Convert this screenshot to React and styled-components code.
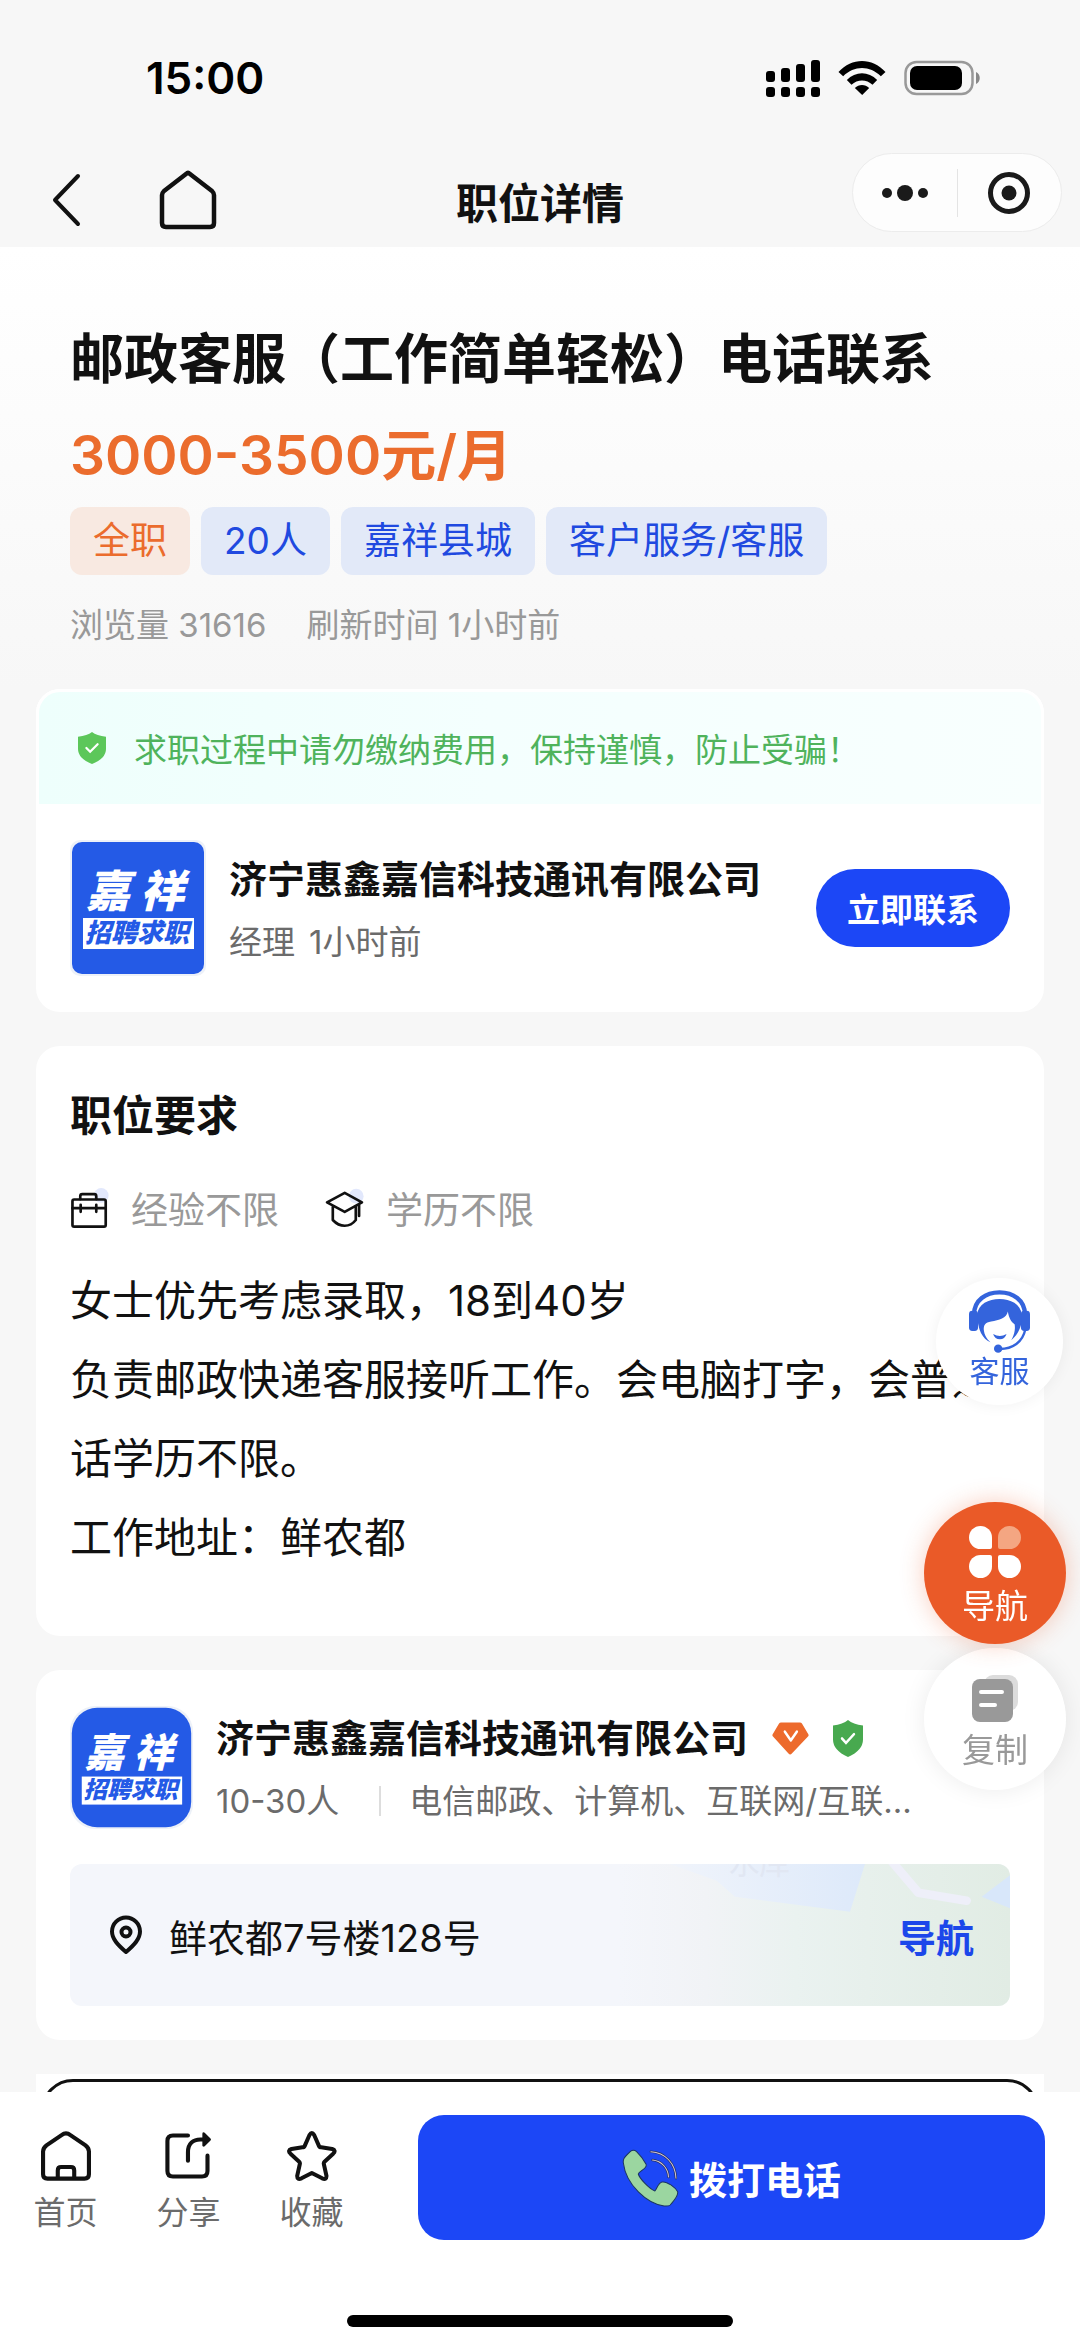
import React from "react";
import styled, { createGlobalStyle } from "styled-components";

const GlobalStyle = createGlobalStyle`
    * {
        box-sizing: border-box;
    }

    body {
        margin: 0;
        background-color: #f7f7f7;
        color: #111111;
        font-family: Inter, "Noto Sans CJK SC", sans-serif;
    }

    h1, h2, h3, p {
        margin: 0;
    }

    button {
        padding: 0;
        border: none;
        background: none;
        color: inherit;
        font-family: inherit;
        cursor: pointer;
    }

    a {
        color: inherit;
        text-decoration: none;
    }

    svg {
        display: block;
        flex-shrink: 0;
    }
`;

const Screen = styled.div`
    display: flex;
    flex-direction: column;
    height: 100vh;
`;

/* status bar + navigation */

const StatusBar = styled.div`
    display: flex;
    align-items: center;
    justify-content: space-between;
    height: 140px;
    padding: 16px 100px 0 146px;
`;

const Time = styled.span`
    color: #000000;
    font-size: 44px;
    font-weight: 600;
`;

const StatusIcons = styled.div`
    display: flex;
    align-items: center;
    gap: 18px;
`;

const NavBar = styled.header`
    display: grid;
    grid-template-columns: 1fr auto 1fr;
    align-items: center;
    height: 107px;
    padding: 13px 18px 0;
`;

const NavActions = styled.div`
    display: flex;
    align-items: center;
    gap: 78px;
    padding-left: 34px;
`;

const NavTitle = styled.h1`
    font-size: 42px;
    font-weight: 600;
`;

const Capsule = styled.div`
    display: flex;
    align-items: center;
    justify-self: end;
    align-self: flex-start;
    width: 210px;
    height: 79px;
    border: 1px solid #ececec;
    border-radius: 40px;
    background-color: #fdfdfd;
`;

const CapsuleButton = styled.button`
    display: flex;
    flex: 1;
    align-items: center;
    justify-content: center;

    & + & {
        height: 48px;
        border-left: 1px solid #e4e4e4;
    }
`;

/* scrolling content */

const Content = styled.main`
    flex: 1;
    min-height: 0;
    overflow-y: auto;
    scrollbar-width: none;
`;

const Summary = styled.section`
    padding: 81px 70px 44px;
    background: linear-gradient(#ffffff, #f7f7f7);
`;

const JobTitle = styled.h2`
    font-size: 54px;
    line-height: 64px;
    font-weight: 600;
`;

const Salary = styled.p`
    margin-top: 31px;
    color: #eb6c2d;
    font-size: 55px;
    line-height: 64px;
    font-weight: 600;
`;

const Tags = styled.div`
    display: flex;
    flex-wrap: wrap;
    gap: 11px;
    margin-top: 20px;
`;

const Tag = styled.span`
    padding: 0 23px;
    border-radius: 12px;
    background-color: ${({ $accent }) => ($accent ? "#f8e9e1" : "#e2e9f8")};
    color: ${({ $accent }) => ($accent ? "#eb6c2d" : "#2049e0")};
    font-size: 37px;
    line-height: 68px;
`;

const Stats = styled.div`
    display: flex;
    gap: 40px;
    margin-top: 30px;
    color: #999999;
    font-size: 33px;
    line-height: 40px;
`;

const Cards = styled.div`
    display: flex;
    flex-direction: column;
    gap: 34px;
    padding: 0 36px;
`;

const Card = styled.section`
    border-radius: 24px;
    background-color: #ffffff;
`;

const SafetyTip = styled.p`
    display: flex;
    align-items: center;
    gap: 28px;
    height: 115px;
    padding-left: 39px;
    border: solid #ffffff;
    border-width: 3px 3px 0;
    border-radius: 24px 24px 0 0;
    background: linear-gradient(90deg, #eefffc, #f4fffe 45%, #f8fffe);
    color: #4fb35c;
    font-size: 33px;
`;

const Employer = styled.div`
    display: flex;
    align-items: center;
    gap: 23px;
    padding: 36px 34px;
`;

const CompanyText = styled.div`
    flex: 1;
    min-width: 0;
`;

const CompanyName = styled.h3`
    display: flex;
    align-items: center;
    gap: 24px;
    font-size: 38px;
    line-height: 48px;
    font-weight: 600;
`;

const CompanyMeta = styled.p`
    display: flex;
    align-items: center;
    gap: ${({ $divided }) => ($divided ? "28px" : "14px")};
    margin-top: 19px;
    color: #6b6b6b;
    font-size: 33px;
    line-height: 40px;
    white-space: nowrap;
`;

const Divider = styled.i`
    width: 2px;
    height: 30px;
    margin-left: 12px;
    background-color: #dddddd;
`;

const ContactButton = styled.button`
    width: 194px;
    height: 78px;
    border-radius: 39px;
    background-color: #1c47f6;
    color: #ffffff;
    font-size: 33px;
    font-weight: 600;
`;

const Requirements = styled(Card)`
    padding: 42px 34px 59px;
`;

const SectionTitle = styled.h3`
    font-size: 42px;
    line-height: 56px;
    font-weight: 600;
`;

const Conditions = styled.div`
    display: flex;
    gap: 46px;
    margin-top: 43px;
    color: #999999;
    font-size: 37px;
    line-height: 48px;
`;

const Condition = styled.div`
    display: flex;
    align-items: center;
    gap: 22px;
`;

const Description = styled.p`
    margin-top: 26px;
    font-size: 42px;
    line-height: 79px;
    white-space: pre-line;
`;

const CompanyCard = styled(Card)`
    padding: 36px 34px 34px;
`;

const CompanyRow = styled.div`
    display: flex;
    align-items: center;
    gap: 23px;
`;

const Address = styled.a`
    position: relative;
    display: flex;
    align-items: center;
    gap: 26px;
    height: 142px;
    margin-top: 35px;
    padding: 0 36px 0 39px;
    border-radius: 12px;
    background-color: #f4f6fb;
    overflow: hidden;
    font-size: 38px;
`;

const MapPreview = styled.svg`
    position: absolute;
    top: 0;
    right: 0;
`;

const AddressText = styled.span`
    flex: 1;
`;

const NavigateText = styled.strong`
    position: relative;
    color: #1c47ea;
    font-weight: 600;
`;

const NextPanel = styled.section`
    height: 140px;
    padding: 5px;
    background-color: #ffffff;
`;

const NextFrame = styled.div`
    height: 130px;
    border: 3px solid #111111;
    border-radius: 32px;
`;

/* floating shortcuts */

const Floating = styled.div`
    position: fixed;
    right: ${({ $right }) => $right}px;
    bottom: ${({ $bottom }) => $bottom}px;
    display: flex;
    flex-direction: column;
    gap: 4px;
`;

const tones = {
    help: "background-color: #ffffff; color: #3464dc; box-shadow: 0 0 16px rgba(0, 0, 0, 0.06);",
    primary: "background-color: #ea5a28; color: #ffffff; box-shadow: 0 0 24px rgba(234, 90, 40, 0.3); z-index: 1;",
    plain: "background-color: #ffffff; color: #999999; box-shadow: 0 0 24px rgba(0, 0, 0, 0.08);",
};

const Bubble = styled.button`
    display: flex;
    flex-direction: column;
    align-items: center;
    justify-content: center;
    gap: ${({ $small }) => ($small ? "0" : "8px")};
    width: ${({ $small }) => ($small ? 127 : 142)}px;
    height: ${({ $small }) => ($small ? 127 : 142)}px;
    padding-top: ${({ $small }) => ($small ? 0 : 6)}px;
    padding-bottom: ${({ $small }) => ($small ? 4 : 0)}px;
    border-radius: 50%;
    font-size: ${({ $small }) => ($small ? 30 : 33)}px;
    line-height: ${({ $small }) => ($small ? 36 : 40)}px;
    ${({ $tone }) => tones[$tone]}
`;

/* bottom bar */

const BottomBar = styled.footer`
    background-color: #ffffff;
`;

const BottomActions = styled.div`
    display: flex;
    align-items: center;
    padding: 23px 35px 0 4px;
`;

const TabButton = styled.button`
    display: flex;
    flex-direction: column;
    align-items: center;
    gap: 12px;
    width: 123px;
    padding-top: 8px;
    color: #6b6b6b;
    font-size: 32px;
    line-height: 40px;
`;

const CallButton = styled.button`
    display: flex;
    flex: 1;
    align-items: center;
    justify-content: center;
    gap: 10px;
    height: 125px;
    margin-left: 45px;
    border-radius: 26px;
    background-color: #1c47f6;
    color: #ffffff;
    font-size: 38px;
    font-weight: 600;
`;

const HomeIndicator = styled.div`
    width: 386px;
    height: 12px;
    margin: 75px auto 20px;
    border-radius: 6px;
    background-color: #000000;
`;

const SignalIcon = () => (
    <svg width="54" height="38" viewBox="0 0 54 38">
        <rect x="0" y="12" width="9" height="11" rx="3" />
        <rect x="15" y="9" width="9" height="14" rx="3" />
        <rect x="30" y="5" width="9" height="18" rx="3" />
        <rect x="45" y="1" width="9" height="22" rx="3" />
        {[0, 15, 30, 45].map((x) => (
            <rect key={x} x={x} y="28" width="9" height="10" rx="3" />
        ))}
    </svg>
);

const WifiIcon = () => (
    <svg width="48" height="34" viewBox="0 0 141 102">
        <path d="M0 33C40-11 101-11 141 33L127 46C94 13 47 13 14 46Z" />
        <path d="M25 57C51 30 90 30 116 57L102 71C84 54 57 54 39 71Z" />
        <path d="M49 81C61 69 80 69 92 81L71 102Z" />
    </svg>
);

const BatteryIcon = () => (
    <svg width="76" height="36" viewBox="0 0 76 36">
        <rect x="1.5" y="2" width="67" height="32" rx="11" fill="none" stroke="#999" strokeWidth="2.5" />
        <rect x="6" y="6" width="52" height="24" rx="7" />
        <path d="M72 12C77 14 77 22 72 24Z" fill="#888" />
    </svg>
);

const BackIcon = () => (
    <svg width="29" height="54" viewBox="0 0 29 54" fill="none" stroke="#111" strokeWidth="4" strokeLinecap="round" strokeLinejoin="round">
        <path d="M26 3L3 27L26 51" />
    </svg>
);

const NavHomeIcon = () => (
    <svg width="58" height="60" viewBox="0 0 58 60" fill="none" stroke="#111" strokeWidth="4.5" strokeLinejoin="round">
        <path d="M3 25Q3 23 5 21L27 4Q29 2 31 4L53 21Q55 23 55 25V53Q55 57 51 57H7Q3 57 3 53Z" />
    </svg>
);

const MoreIcon = () => (
    <svg width="48" height="18" viewBox="0 0 48 18" fill="#1a1a1a">
        <circle cx="6" cy="9" r="5" />
        <circle cx="24" cy="9" r="8" />
        <circle cx="42" cy="9" r="5" />
    </svg>
);

const CloseIcon = () => (
    <svg width="44" height="44" viewBox="0 0 44 44">
        <circle cx="22" cy="22" r="18.5" fill="none" stroke="#1a1a1a" strokeWidth="5" />
        <circle cx="22" cy="22" r="7.5" fill="#1a1a1a" />
    </svg>
);

const ShieldIcon = ({ width, height, color }) => (
    <svg width={width} height={height} viewBox="0 0 30 34" preserveAspectRatio="none">
        <path d="M15 0Q20 4 30 5V18Q30 28 15 34Q0 28 0 18V5Q10 4 15 0Z" fill={color} />
        <path d="M9 17L13 21L21 13" fill="none" stroke="#fff" strokeWidth="2.4" strokeLinecap="round" />
    </svg>
);

const VipIcon = () => (
    <svg width="37" height="33" viewBox="0 0 110 86" preserveAspectRatio="none">
        <path d="M27 1H83Q87 1 89 4L108 32Q110 35 107 38L59 82Q54 87 49 82L3 38Q0 35 2 32L21 4Q23 1 27 1Z" fill="#ed6a2c" />
        <path d="M38 25L56 48L74 25" fill="none" stroke="#fff" strokeWidth="7" strokeLinecap="round" strokeLinejoin="round" />
    </svg>
);

const CompanyLogo = ({ size, radius }) => (
    <svg width={size} height={size} viewBox="0 0 136 136" fontFamily='"Noto Sans CJK SC", sans-serif' fontWeight="900" fontStyle="italic">
        <rect width="136" height="136" rx={radius} fill="#edf1f8" />
        <rect x="2" y="2" width="132" height="132" rx={radius} fill="#245ae6" />
        <g fill="#fff" fontSize="44" textAnchor="middle">
            <text x="38" y="67">嘉</text>
            <text x="92" y="67">祥</text>
        </g>
        <rect x="13" y="78" width="111" height="31" fill="#fff" />
        <text x="67" y="102" fontSize="26" textAnchor="middle" fill="#245ae6">招聘求职</text>
    </svg>
);

const BriefcaseIcon = () => (
    <svg width="39" height="46" viewBox="0 0 95 112" fill="none" stroke="#111" strokeWidth="6.5" strokeLinecap="round" strokeLinejoin="round">
        <circle cx="76" cy="18" r="18" fill="#e2e8fc" stroke="none" />
        <rect x="6" y="28" width="81" height="66" rx="4" />
        <path d="M25 27V20Q25 15 30 15H59Q64 15 64 20V27M6 49H87M26 41V58M64 41V58" />
    </svg>
);

const GraduationIcon = () => (
    <svg width="39" height="46" viewBox="0 0 95 112" fill="none" stroke="#111" strokeWidth="6.5" strokeLinecap="round" strokeLinejoin="round">
        <circle cx="76" cy="20" r="18" fill="#e2e8fc" stroke="none" />
        <path d="M5 35L48 12L90 35L48 58ZM19 46V78Q32 92 48 92Q64 92 75 78V46M83 40V68" />
    </svg>
);

const PinIcon = () => (
    <svg width="34" height="40" viewBox="0 0 34 40" fill="none" stroke="#111" strokeWidth="4">
        <path d="M17 37C9 30 3 24 3 16.500A14 14 0 0 1 31 16.500C31 24 25 30 17 37Z" strokeLinejoin="round" />
        <circle cx="17" cy="17" r="4.500" />
    </svg>
);

const HeadsetIcon = () => (
    <svg width="61" height="63" viewBox="0 0 182 188" fill="currentColor">
        <path d="M15 72C16 30 50 7 91 7C132 7 166 30 167 72" fill="none" stroke="currentColor" strokeWidth="13" />
        <rect x="0" y="62" width="27" height="60" rx="10" />
        <rect x="155" y="62" width="27" height="60" rx="10" />
        <path d="M24 74C28 42 58 27 91 27C124 27 154 42 158 74C160 105 148 132 126 150C138 128 138 112 136 102C126 95 119 84 116 64C112 84 90 90 66 94C48 97 44 104 44 118C46 135 52 145 64 156C40 147 26 118 24 74Z" />
        <path d="M72 131Q92 143 112 131Q107 147 92 147Q77 147 72 131Z" />
        <circle cx="87" cy="175" r="12.500" />
        <path d="M92 176C130 176 160 156 168 118" fill="none" stroke="currentColor" strokeWidth="7" />
    </svg>
);

const PetalsIcon = () => (
    <svg width="52" height="52" viewBox="0 0 52 52" fill="#fff">
        <path d="M11.500 0A11.500 11.500 0 0 1 23 11.500V21Q23 23 21 23H11.500A11.500 11.500 0 0 1 11.500 0Z" />
        <path d="M40.500 0A11.500 11.500 0 0 1 40.500 23H31Q29 23 29 21V11.500A11.500 11.500 0 0 1 40.500 0Z" fill="#f4a682" />
        <path d="M11.500 29H21Q23 29 23 31V40.500A11.500 11.500 0 1 1 11.500 29Z" />
        <path d="M31 29H40.500A11.500 11.500 0 1 1 29 40.500V31Q29 29 31 29Z" />
    </svg>
);

const CopyIcon = () => (
    <svg width="46" height="47" viewBox="0 0 46 47">
        <rect x="12" y="0" width="34" height="36" rx="9" fill="#dcdcdc" />
        <rect x="0" y="4" width="41" height="43" rx="8" fill="#999" />
        <path d="M9 17H30M9 30H23" stroke="#fff" strokeWidth="4" strokeLinecap="round" />
    </svg>
);

const HomeIcon = () => (
    <svg width="50" height="50" viewBox="0 0 146 146" fill="none" stroke="#111" strokeWidth="12">
        <path d="M6 60Q6 50 16 42L60 12Q73 2 86 12L130 42Q140 50 140 60V126Q140 139 127 139H19Q6 139 6 126Z" />
        <path d="M49 139V115Q49 105 59 105H87Q97 105 97 115V139" />
    </svg>
);

const ShareIcon = () => (
    <svg width="50" height="50" viewBox="-4 0 146 146" fill="none" stroke="#111" strokeWidth="12" strokeLinecap="round">
        <path d="M66 13H22Q6 13 6 29V117Q6 133 22 133H107Q123 133 123 117V72" />
        <path d="M66 87V62C66 36 82 25 102 25H124" />
        <path d="M112 8L129 25L112 42Z" fill="#111" strokeWidth="8" strokeLinejoin="round" />
    </svg>
);

const StarIcon = () => (
    <svg width="50" height="50" viewBox="0 0 147 150" fill="none" stroke="#111" strokeWidth="12" strokeLinejoin="round">
        <path d="M66 12Q73 0 80 12L94 44Q96 49 101 49L134 54Q147 58 137 68L111 92Q108 95 109 99L117 135Q117 148 104 142L73 126L42 142Q29 148 29 135L37 99Q38 95 35 92L9 68Q-1 58 12 54L45 49Q50 49 52 44Z" />
    </svg>
);

const PhoneIcon = () => (
    <svg width="57" height="58" viewBox="238 266 168 174" preserveAspectRatio="none" fill="none" strokeLinecap="round">
        <path
            d="M242 308C240 295 246 290 262 274Q272 266 281 274C293 286 302 298 309 312C314 324 288 332 286 341C290 355 318 385 335 392C341 386 344 368 356 365C370 362 396 382 402 394C405 408 388 424 380 434Q376 438 362 437C312 430 250 374 242 308Z"
            fill="#9bd6a0"
            stroke="#1b3560"
            strokeWidth="3"
        />
        <path d="M323 274C365 276 396 310 397 354M328 299C356 302 374 325 375 350" stroke="#26335f" strokeWidth="7" />
        <path d="M323 274C365 276 396 310 397 354M328 299C356 302 374 325 375 350" stroke="#d4c5d8" strokeWidth="3" />
    </svg>
);

const MapArt = () => (
    <MapPreview width="390" height="143" viewBox="0 0 1170 429" aria-hidden="true">
        <defs>
            <linearGradient id="land">
                <stop offset="0" stopColor="#f4f6fb" />
                <stop offset="0.22" stopColor="#f1f3f6" />
                <stop offset="0.45" stopColor="#eaf2f0" />
                <stop offset="1" stopColor="#e1ece4" />
            </linearGradient>
            <linearGradient id="water">
                <stop offset="0" stopColor="#f0f4fb" />
                <stop offset="1" stopColor="#dde9fa" />
            </linearGradient>
        </defs>
        <rect width="1170" height="429" fill="url(#land)" />
        <path d="M290 50L150 0H735L690 143L345 98Z" fill="url(#water)" />
        <text x="326" y="30" fontSize="92" fill="#e1e7f3">水库</text>
        <path d="M805-20L895 86L1040 110" fill="none" stroke="#eeeff9" strokeWidth="26" strokeLinecap="round" strokeLinejoin="round" />
        <path d="M1170 34V133L1085 98Z" fill="#d8e7fa" />
    </MapPreview>
);

const description = `女士优先考虑录取，18到40岁
负责邮政快递客服接听工作。会电脑打字，会普通话学历不限。
工作地址：鲜农都`;

const company = "济宁惠鑫嘉信科技通讯有限公司";

export default function App() {
    return (
        <Screen>
            <GlobalStyle />
            <StatusBar>
                <Time>15:00</Time>
                <StatusIcons>
                    <SignalIcon />
                    <WifiIcon />
                    <BatteryIcon />
                </StatusIcons>
            </StatusBar>
            <NavBar>
                <NavActions>
                    <button type="button" aria-label="返回"><BackIcon /></button>
                    <button type="button" aria-label="首页"><NavHomeIcon /></button>
                </NavActions>
                <NavTitle>职位详情</NavTitle>
                <Capsule>
                    <CapsuleButton type="button" aria-label="更多"><MoreIcon /></CapsuleButton>
                    <CapsuleButton type="button" aria-label="关闭"><CloseIcon /></CapsuleButton>
                </Capsule>
            </NavBar>

            <Content>
                <Summary>
                    <JobTitle>邮政客服（工作简单轻松）电话联系</JobTitle>
                    <Salary>3000-3500元/月</Salary>
                    <Tags>
                        <Tag $accent>全职</Tag>
                        <Tag>20人</Tag>
                        <Tag>嘉祥县城</Tag>
                        <Tag>客户服务/客服</Tag>
                    </Tags>
                    <Stats>
                        <span>浏览量 31616</span>
                        <span>刷新时间 1小时前</span>
                    </Stats>
                </Summary>

                <Cards>
                    <Card>
                        <SafetyTip>
                            <ShieldIcon width={28} height={32} color="#5cc75a" />
                            求职过程中请勿缴纳费用，保持谨慎，防止受骗！
                        </SafetyTip>
                        <Employer>
                            <CompanyLogo size={136} radius={10} />
                            <CompanyText>
                                <CompanyName>{company}</CompanyName>
                                <CompanyMeta>
                                    <span>经理</span>
                                    <span>1小时前</span>
                                </CompanyMeta>
                            </CompanyText>
                            <ContactButton type="button">立即联系</ContactButton>
                        </Employer>
                    </Card>

                    <Requirements>
                        <SectionTitle>职位要求</SectionTitle>
                        <Conditions>
                            <Condition><BriefcaseIcon />经验不限</Condition>
                            <Condition><GraduationIcon />学历不限</Condition>
                        </Conditions>
                        <Description>{description}</Description>
                    </Requirements>

                    <CompanyCard>
                        <CompanyRow>
                            <CompanyLogo size={123} radius={28} />
                            <CompanyText>
                                <CompanyName>
                                    {company}
                                    <VipIcon />
                                    <ShieldIcon width={30} height={37} color="#48a94f" />
                                </CompanyName>
                                <CompanyMeta $divided>
                                    <span>10-30人</span>
                                    <Divider />
                                    <span>电信邮政、计算机、互联网/互联...</span>
                                </CompanyMeta>
                            </CompanyText>
                        </CompanyRow>
                        <Address href="#map">
                            <MapArt />
                            <PinIcon />
                            <AddressText>鲜农都7号楼128号</AddressText>
                            <NavigateText>导航</NavigateText>
                        </Address>
                    </CompanyCard>

                    <NextPanel>
                        <NextFrame />
                    </NextPanel>
                </Cards>
            </Content>

            <Floating $right={17} $bottom={942}>
                <Bubble type="button" $tone="help" $small><HeadsetIcon />客服</Bubble>
            </Floating>
            <Floating $right={14} $bottom={557}>
                <Bubble type="button" $tone="primary"><PetalsIcon />导航</Bubble>
                <Bubble type="button" $tone="plain"><CopyIcon />复制</Bubble>
            </Floating>

            <BottomBar>
                <BottomActions>
                    <TabButton type="button"><HomeIcon />首页</TabButton>
                    <TabButton type="button"><ShareIcon />分享</TabButton>
                    <TabButton type="button"><StarIcon />收藏</TabButton>
                    <CallButton type="button"><PhoneIcon />拨打电话</CallButton>
                </BottomActions>
                <HomeIndicator />
            </BottomBar>
        </Screen>
    );
}
